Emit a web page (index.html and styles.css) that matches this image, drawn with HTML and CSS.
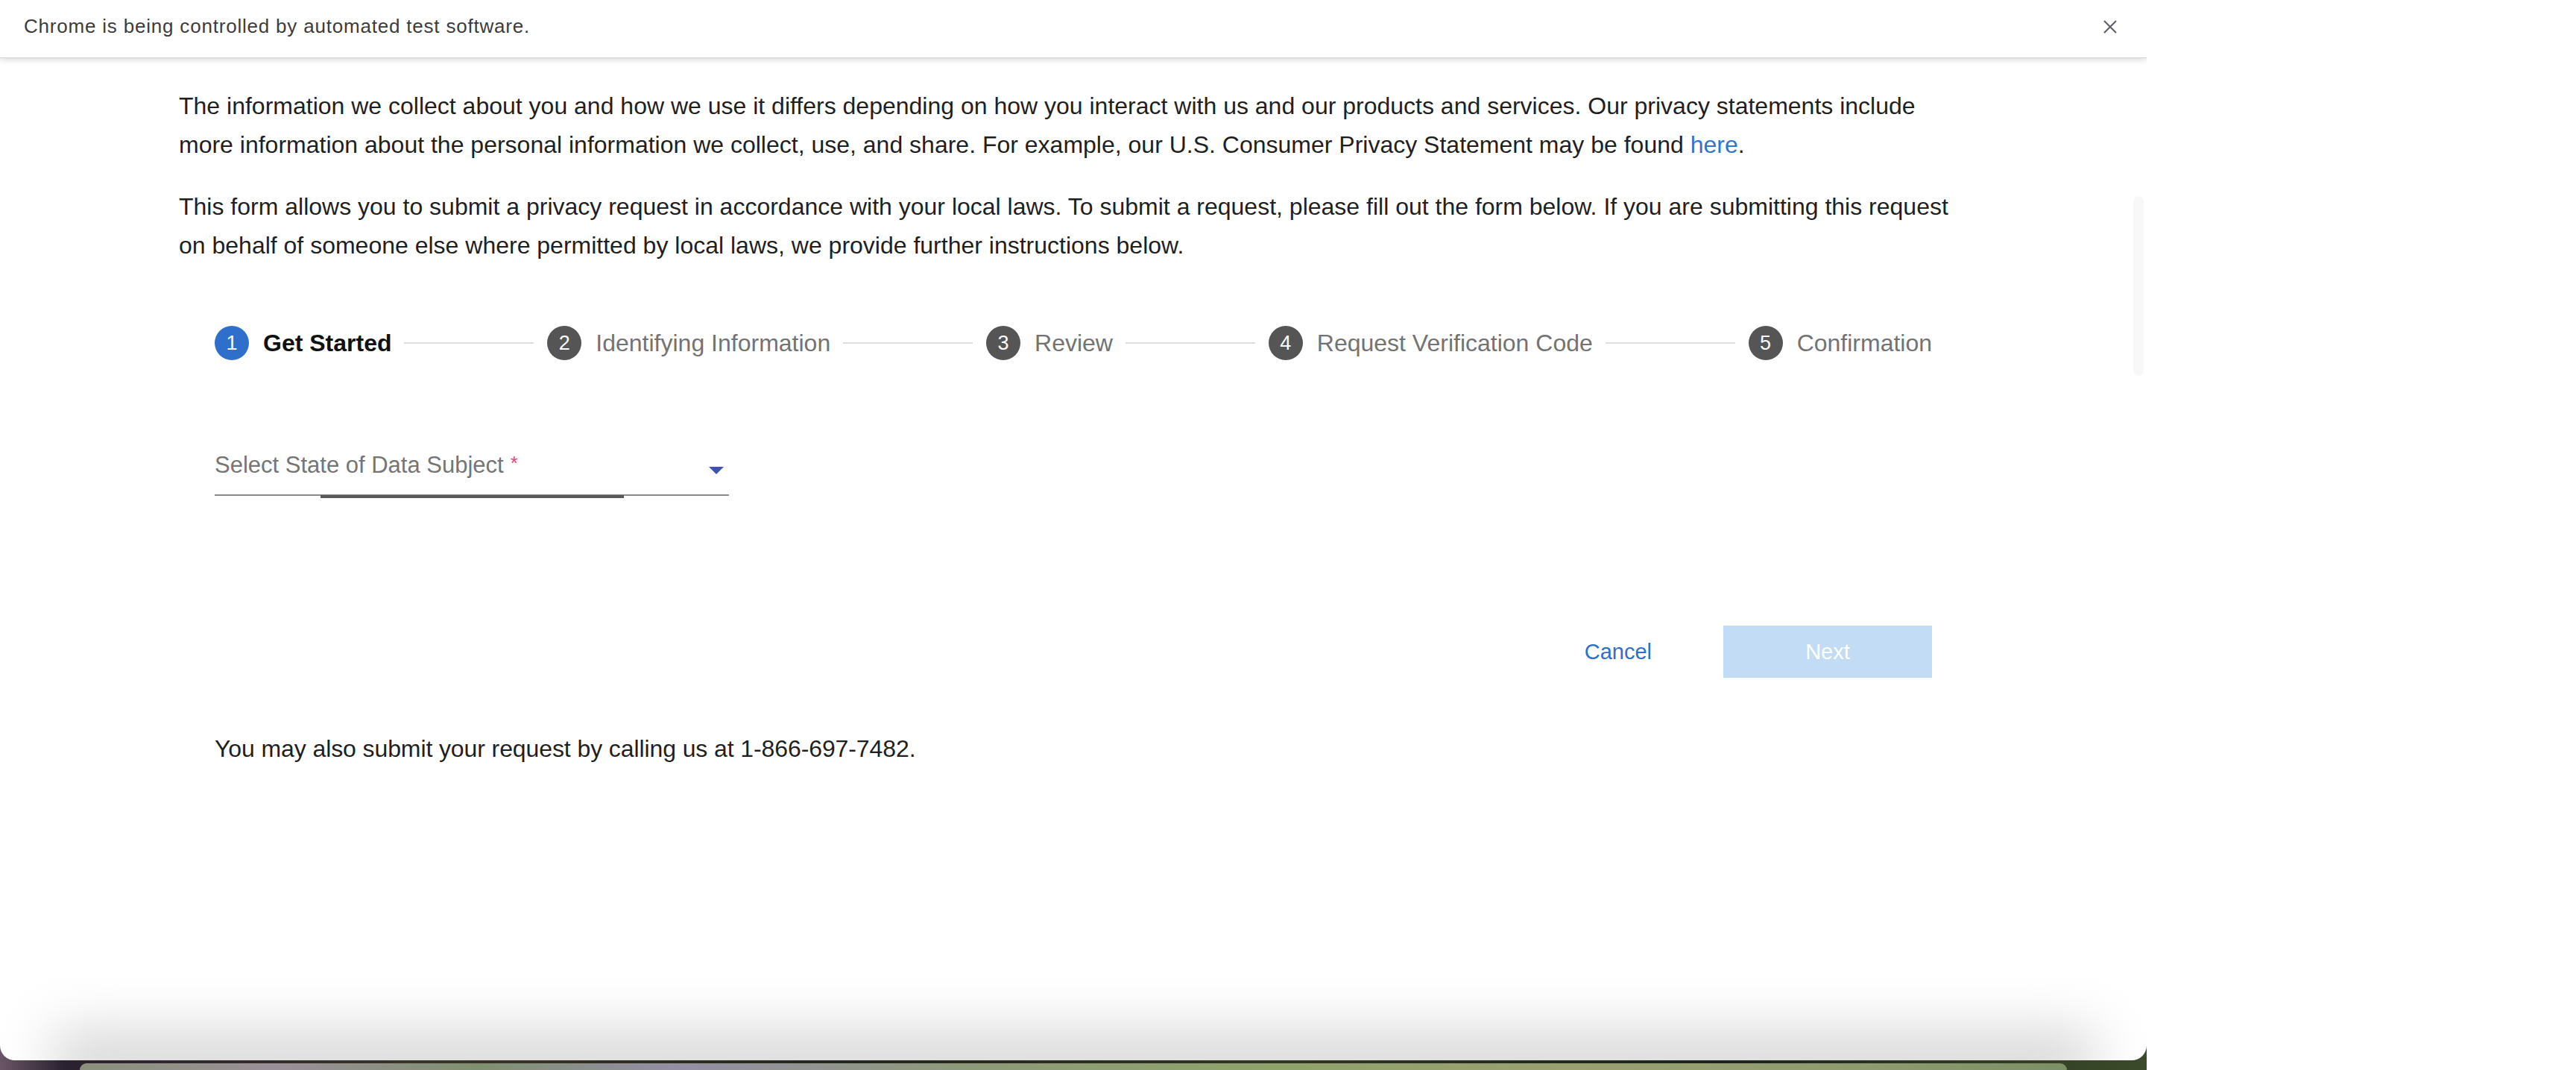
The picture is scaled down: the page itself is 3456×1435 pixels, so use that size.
FILE: index.html
```html
<!DOCTYPE html>
<html lang="en">
<head>
<meta charset="utf-8">
<title>Privacy Request</title>
<link rel="stylesheet" href="styles.css">
</head>
<body>
<div class="screen">
  <div class="desk">
    <div class="window">
      <div class="infobar">
        <span class="infobar-text">Chrome is being controlled by automated test software.</span>
        <svg class="infobar-close" width="20" height="20" viewBox="0 0 20 20"><path d="M2 2 L18 18 M18 2 L2 18" stroke="#5f6368" stroke-width="2.2" fill="none"/></svg>
      </div>
      <div class="page">
        <p class="para">The information we collect about you and how we use it differs depending on how you interact with us and our products and services. Our privacy statements include more information about the personal information we collect, use, and share. For example, our U.S. Consumer Privacy Statement may be found <a class="link" href="#">here</a>.</p>
        <p class="para">This form allows you to submit a privacy request in accordance with your local laws. To submit a request, please fill out the form below. If you are submitting this request on behalf of someone else where permitted by local laws, we provide further instructions below.</p>
        <div class="form">
          <div class="stepper">
            <div class="step active"><span class="step-icon">1</span><span class="step-label">Get Started</span></div>
            <div class="connector"></div>
            <div class="step"><span class="step-icon">2</span><span class="step-label">Identifying Information</span></div>
            <div class="connector"></div>
            <div class="step"><span class="step-icon">3</span><span class="step-label">Review</span></div>
            <div class="connector"></div>
            <div class="step"><span class="step-icon">4</span><span class="step-label">Request Verification Code</span></div>
            <div class="connector"></div>
            <div class="step"><span class="step-icon">5</span><span class="step-label">Confirmation</span></div>
          </div>
          <div class="select">
            <span class="select-label">Select State of Data Subject<span class="req">*</span></span>
            <svg class="select-arrow" width="20" height="10" viewBox="0 0 20 10"><path d="M0 0 L20 0 L10 10 Z" fill="#3f51b5"/></svg>
            <span class="select-ripple"></span>
          </div>
          <div class="actions">
            <button class="btn-cancel" type="button">Cancel</button>
            <button class="btn-next" type="button">Next</button>
          </div>
          <p class="phone">You may also submit your request by calling us at 1-866-697-7482.</p>
        </div>
      </div>
      <div class="scroll-thumb"></div>
      <div class="bottom-shade"></div>
    </div>
    <div class="wallpaper">
      <div class="dock"></div>
    </div>
  </div>
</div>
</body>
</html>
```

FILE: styles.css
```css
* { box-sizing: border-box; }
html, body {
  margin: 0;
  padding: 0;
  background: #ffffff;
  width: 3456px;
  height: 1435px;
  overflow: hidden;
  font-family: "Liberation Sans", Arial, sans-serif;
}
.screen {
  display: flex;
  width: 3456px;
  height: 1435px;
}
.desk {
  width: 2880px;
  height: 1435px;
  display: flex;
  flex-direction: column;
  background: linear-gradient(90deg, #6a5566 0%, #2a2230 3%, #3a3428 20%, #23281c 40%, #2f3620 60%, #1e2418 80%, #3b4a2a 100%);
}
.window {
  position: relative;
  height: 1422px;
  background: #ffffff;
  border-radius: 0 0 20px 20px;
  overflow: hidden;
  display: flex;
  flex-direction: column;
}
.infobar {
  height: 78px;
  flex: none;
  display: flex;
  align-items: center;
  justify-content: space-between;
  padding: 0 39px 6px 32px;
  background: #ffffff;
  border-bottom: 1px solid #d2d2d2;
  box-shadow: 0 2px 8px rgba(0,0,0,0.16);
  position: relative;
  z-index: 1;
}
.infobar-text {
  font-size: 26px;
  letter-spacing: 0.8px;
  color: #3c3c3c;
}
.infobar-close { display: block; }
.page {
  padding: 38px 0 0 240px;
  width: 2640px;
}
.para {
  margin: 0 0 31px;
  font-size: 32px;
  line-height: 52px;
  color: #1f1f1f;
}
.link { color: #3073d0; text-decoration: none; }
.form {
  padding: 50px 48px 0;
}
.stepper {
  display: flex;
  align-items: center;
  height: 48px;
}
.step {
  display: flex;
  align-items: center;
  flex: none;
}
.step-icon {
  width: 46px;
  height: 46px;
  border-radius: 50%;
  background: #555555;
  color: #ffffff;
  font-size: 27px;
  display: flex;
  align-items: center;
  justify-content: center;
  margin-right: 19px;
}
.step.active .step-icon { background: #2f6fcc; }
.step-label {
  font-size: 32px;
  color: #737373;
}
.step.active .step-label { color: #111111; font-weight: 700; }
.connector {
  flex: 1;
  height: 2px;
  background: #dedede;
  margin: 0 18px 0 17px;
}
.select {
  position: relative;
  width: 690px;
  margin-top: 120px;
  display: flex;
  justify-content: space-between;
  align-items: flex-start;
  padding-bottom: 18px;
  border-bottom: 2px solid #8c8c8c;
}
.select-label {
  font-size: 31px;
  line-height: 40px;
  color: #757575;
}
.req {
  color: #e8457a;
  font-size: 26px;
  position: relative;
  top: -4px;
  margin-left: 9px;
}
.select-arrow {
  margin: 22px 7px 0 0;
  display: block;
}
.select-ripple {
  position: absolute;
  left: 142px;
  width: 407px;
  bottom: -5px;
  height: 4px;
  background: #585858;
}
.actions {
  display: flex;
  justify-content: flex-end;
  align-items: center;
  margin-top: 174px;
}
.btn-cancel {
  font-family: "Liberation Sans", Arial, sans-serif;
  font-size: 29px;
  color: #2f6fcc;
  background: none;
  border: none;
  padding: 0 40px;
  height: 70px;
  margin-right: 56px;
}
.btn-next {
  font-family: "Liberation Sans", Arial, sans-serif;
  font-size: 29px;
  color: #ffffff;
  background: #c2dcf6;
  border: none;
  width: 280px;
  height: 70px;
}
.phone {
  margin: 69px 0 0;
  font-size: 32px;
  line-height: 52px;
  color: #1f1f1f;
  letter-spacing: -0.1px;
}
.scroll-thumb {
  position: absolute;
  left: 2862px;
  top: 263px;
  width: 14px;
  height: 241px;
  border-radius: 7px;
  background: #f8f8f8;
}
.bottom-shade {
  position: absolute;
  left: 70px;
  right: 70px;
  bottom: -40px;
  height: 80px;
  background: #d6d6d6;
  filter: blur(36px);
}
.wallpaper {
  flex: 1;
  position: relative;
  display: flex;
  padding: 4px 107px 0;
}
.dock {
  flex: 1;
  border-radius: 14px 14px 0 0;
  background: linear-gradient(90deg, #8a917a 0%, #9a8f98 10%, #7f9070 20%, #948ea4 30%, #8d9a78 45%, #8fa26a 60%, #9aa070 75%, #8e9b6e 90%, #7c8f66 100%);
}
```
